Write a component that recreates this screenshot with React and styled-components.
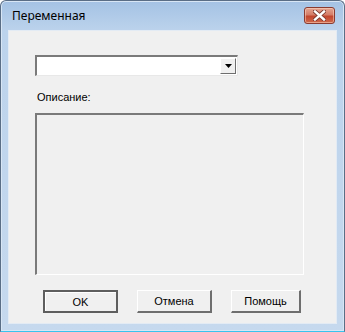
import React from "react";
import styled, { createGlobalStyle } from "styled-components";

const GlobalStyle = createGlobalStyle`
  html, body {
    margin: 0;
    padding: 0;
    background: #ffffff;
  }
`;

const CloseIcon = () => (
  <svg width="13" height="11" viewBox="0 0 13 11">
    <path
      d="M2 1.5 L11 9.5 M11 1.5 L2 9.5"
      stroke="#7a3a30"
      strokeWidth="4.2"
      strokeLinecap="square"
    />
    <path
      d="M2 1.5 L11 9.5 M11 1.5 L2 9.5"
      stroke="#ffffff"
      strokeWidth="2.4"
      strokeLinecap="square"
    />
  </svg>
);

const App = () => {
  return (
    <>
      <GlobalStyle />
      <Window>
        <TitleBar>
          <Title>Переменная</Title>
          <CloseButton aria-label="Закрыть">
            <CloseIcon />
          </CloseButton>
        </TitleBar>
        <Client>
          <Combo>
            <ComboField />
            <ComboArrow>
              <svg width="7" height="4" viewBox="0 0 7 4">
                <path d="M0 0 H7 L3.5 4 Z" fill="#000" />
              </svg>
            </ComboArrow>
          </Combo>
          <Label>Описание:</Label>
          <Description />
          <ButtonRow>
            <DlgButton $default $width={75}>
              OK
            </DlgButton>
            <DlgButton $width={75}>Отмена</DlgButton>
            <DlgButton $width={70}>Помощь</DlgButton>
          </ButtonRow>
        </Client>
      </Window>
    </>
  );
};

const Window = styled.div`
  width: 345px;
  height: 332px;
  box-sizing: border-box;
  border: 1px solid #5a6e86;
  border-bottom-color: #39c4ee;
  border-radius: 6px 6px 0 0;
  background: linear-gradient(
    to bottom,
    #a4c2e4 0px,
    #bcd3ec 30px,
    #c6d9ee 100%
  );
  display: flex;
  flex-direction: column;
  box-shadow: inset 0 0 0 1px #d8e6f5;
`;

const TitleBar = styled.div`
  height: 29px;
  display: flex;
  align-items: center;
  justify-content: space-between;
  padding: 0 9px 0 11px;
`;

const Title = styled.div`
  font-family: "Noto Sans", "Open Sans", sans-serif;
  font-size: 12px;
  color: #000;
`;

const CloseButton = styled.div`
  width: 31px;
  height: 17px;
  box-sizing: border-box;
  border: 1px solid #8a3b30;
  border-radius: 3px;
  margin-top: -1px;
  background: linear-gradient(
    to bottom,
    #e4a490 0%,
    #d47d68 45%,
    #c2462e 55%,
    #cf6a4c 100%
  );
  box-shadow: inset 0 0 0 1px rgba(255, 220, 200, 0.5);
  display: flex;
  align-items: center;
  justify-content: center;
`;

const Client = styled.div`
  flex: 1;
  margin: 0 7px 7px;
  background: #f0f0f0;
  border: 1px solid #e3ebf4;
  box-sizing: border-box;
  padding: 24px 0 0 26px;
  display: flex;
  flex-direction: column;
  font-family: "Liberation Sans", Arial, sans-serif;
  font-size: 11px;
  color: #000;
`;

const Combo = styled.div`
  width: 203px;
  height: 21px;
  box-sizing: border-box;
  border-style: solid;
  border-width: 2px 1px 1px 2px;
  border-color: #7a7a7a #e8e8e8 #e8e8e8 #7a7a7a;
  background: #fff;
  display: flex;
  padding: 1px 1px 1px 0;
`;

const ComboField = styled.div`
  flex: 1;
`;

const ComboArrow = styled.div`
  width: 16px;
  box-sizing: border-box;
  background: #f0f0f0;
  border-style: solid;
  border-width: 1px;
  border-color: #ffffff #6e6e6e #6e6e6e #ffffff;
  display: flex;
  align-items: center;
  justify-content: center;
`;

const Label = styled.div`
  margin: 15px 0 0 2px;
  line-height: 13px;
  height: 13px;
`;

const Description = styled.div`
  margin-top: 9px;
  width: 269px;
  height: 162px;
  box-sizing: border-box;
  border-style: solid;
  border-width: 2px 1px 1px 2px;
  border-color: #7a7a7a #ffffff #ffffff #7a7a7a;
  background: #f0f0f0;
`;

const ButtonRow = styled.div`
  display: flex;
  gap: 19px;
  margin: 15px 0 0 8px;
`;

const DlgButton = styled.div`
  width: ${(p) => p.$width}px;
  height: 23px;
  box-sizing: border-box;
  background: #f0f0f0;
  display: flex;
  align-items: center;
  justify-content: center;
  border-style: solid;
  border-width: ${(p) => (p.$default ? "2px" : "1px 2px 2px 1px")};
  border-color: ${(p) =>
    p.$default ? "#5e5e5e" : "#ffffff #6e6e6e #6e6e6e #ffffff"};
  box-shadow: ${(p) => (p.$default ? "inset 1px 1px 0 #ffffff" : "none")};
  font-size: 11px;
  color: #000;
`;

export default App;
